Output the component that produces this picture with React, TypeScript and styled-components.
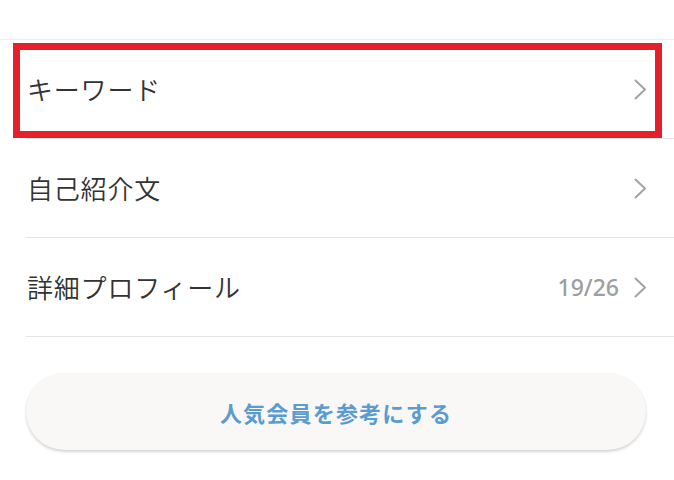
import React from "react";
import styled, { createGlobalStyle } from "styled-components";

const Global = createGlobalStyle`
  html, body { margin: 0; padding: 0; background: #ffffff; }
  body { font-family: "Noto Sans CJK JP", "Noto Sans", sans-serif; }
`;

const Page = styled.div`
  width: 674px;
  height: 480px;
  overflow: hidden;
  background: #ffffff;
  padding-top: 39px;
  box-sizing: border-box;
`;

const List = styled.div`
  border-top: 1px solid #ececec;
  display: flex;
  flex-direction: column;
`;

const Row = styled.div`
  position: relative;
  height: 98px;
  display: flex;
  align-items: center;
  justify-content: space-between;
  padding: 0 27px;
  margin-bottom: 1px;
  &::after {
    content: "";
    position: absolute;
    left: 26px;
    right: 0;
    bottom: -1px;
    height: 1px;
    background: #e4e4e4;
  }
`;

const Label = styled.span`
  font-size: 26px;
  font-weight: 350;
  color: #333333;
  letter-spacing: 0.8px;
  line-height: 1;
`;

const Right = styled.div`
  display: flex;
  align-items: center;
  gap: 15px;
`;

const Count = styled.span`
  font-family: "Noto Sans", "Liberation Sans", sans-serif;
  font-size: 23px;
  font-weight: 500;
  color: #9e9e9e;
`;

const Highlight = styled.div`
  position: absolute;
  left: 13px;
  right: 12px;
  top: 3px;
  height: 95px;
  border: 7px solid #e3202c;
  box-sizing: border-box;
  pointer-events: none;
  z-index: 1;
`;

const ButtonWrap = styled.div`
  padding: 36px 28px 0 26px;
`;

const Pill = styled.button`
  width: 100%;
  height: 77px;
  border: none;
  border-radius: 39px;
  background: #f9f8f6;
  box-shadow: 0 2px 3px rgba(0, 0, 0, 0.16), 0 0 2px rgba(0, 0, 0, 0.04);
  font-family: "Noto Sans CJK JP", sans-serif;
  font-size: 22px;
  font-weight: 700;
  color: #5a9bd0;
  letter-spacing: 1.2px;
  display: flex;
  align-items: center;
  justify-content: center;
`;

const Chevron = () => (
  <svg width="13" height="21" viewBox="0 0 13 21" fill="none">
    <polyline points="1.5,1.5 11,10.5 1.5,19.5" stroke="#a3a3a3" strokeWidth="2" strokeLinecap="round" strokeLinejoin="round" />
  </svg>
);

type Item = { label: string; count?: string; highlighted?: boolean };

const items: Item[] = [
  { label: "キーワード", highlighted: true },
  { label: "自己紹介文" },
  { label: "詳細プロフィール", count: "19/26" },
];

export default function App() {
  return (
    <>
      <Global />
      <Page>
        <List>
          {items.map((it) => (
            <Row key={it.label}>
              <Label>{it.label}</Label>
              <Right>
                {it.count && <Count>{it.count}</Count>}
                <Chevron />
              </Right>
              {it.highlighted && <Highlight />}
            </Row>
          ))}
        </List>
        <ButtonWrap>
          <Pill>人気会員を参考にする</Pill>
        </ButtonWrap>
      </Page>
    </>
  );
}
